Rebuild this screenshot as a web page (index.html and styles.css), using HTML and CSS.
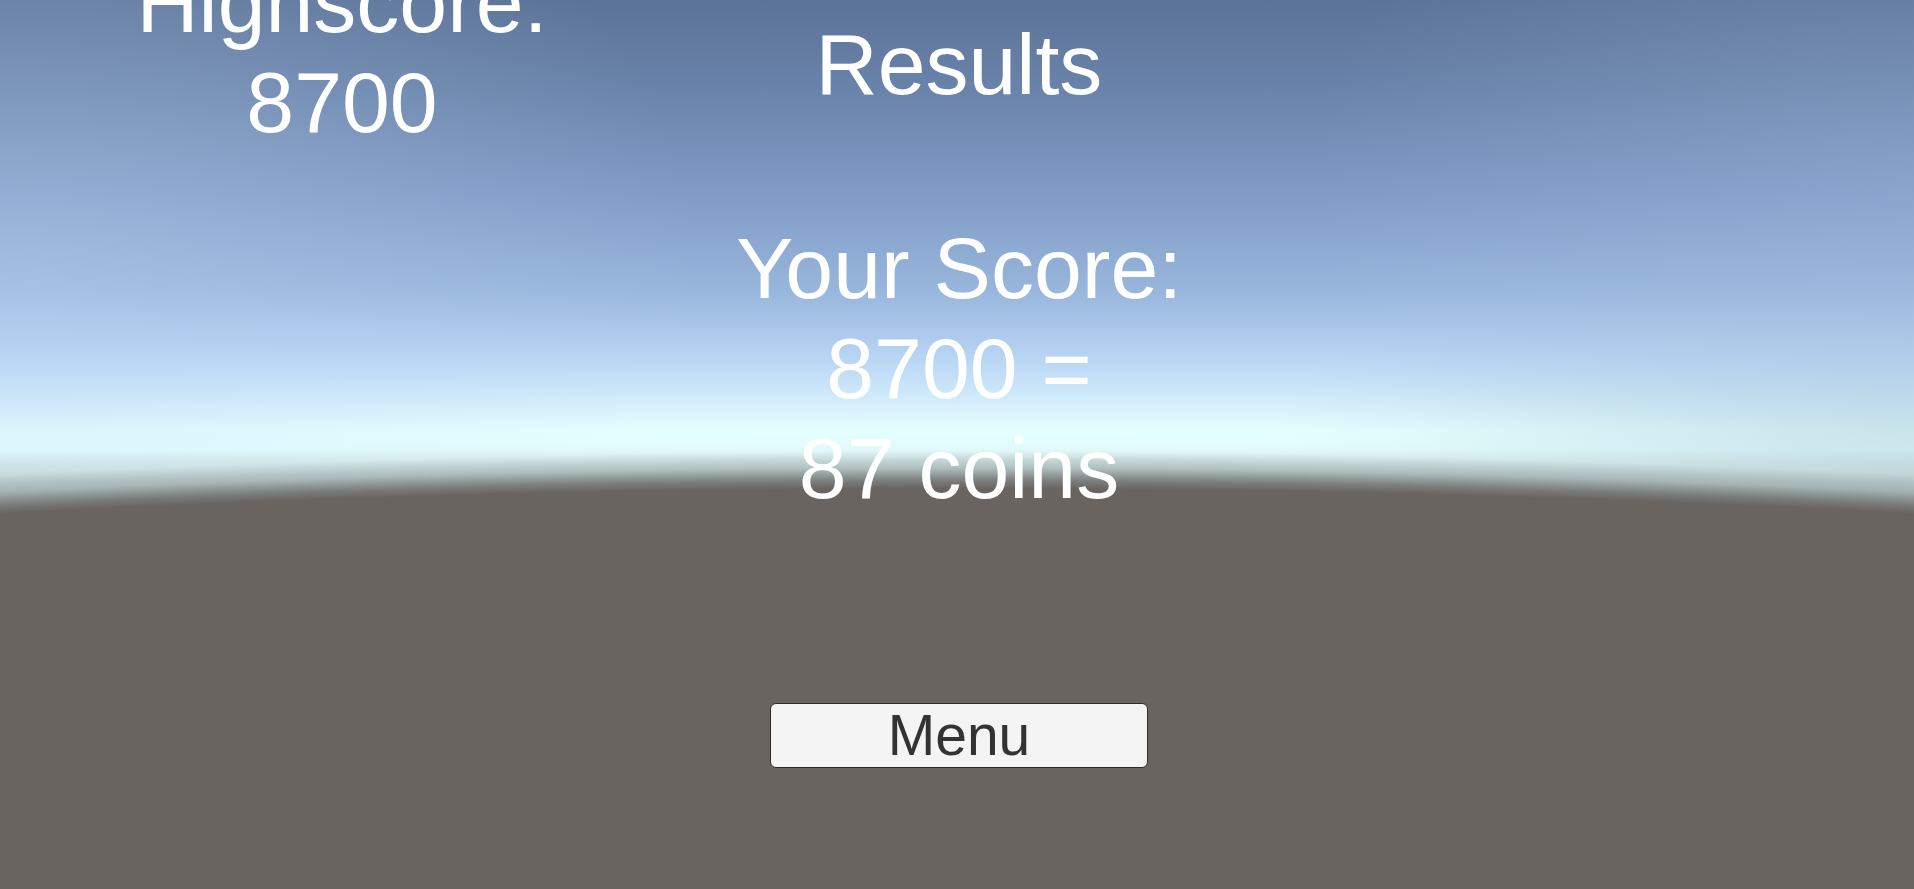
FILE: index.html
```html
<!DOCTYPE html>
<html lang="en">
<head>
<meta charset="utf-8">
<title>Results</title>
<link rel="stylesheet" href="styles.css">
</head>
<body>
<div class="screen">
  <section class="highscore">
    <div class="hs-label">Highscore:</div>
    <div class="hs-value">8700</div>
  </section>
  <main class="results">
    <h1 class="title">Results</h1>
    <div class="score">
      <div>Your Score:</div>
      <div>8700 =</div>
      <div>87 coins</div>
    </div>
    <button class="menu-btn" type="button">Menu</button>
  </main>
  <div class="spacer"></div>
</div>
</body>
</html>
```
FILE: styles.css
```css
html, body {
  margin: 0;
  padding: 0;
  height: 100%;
  overflow: hidden;
}

body {
  font-family: "Liberation Sans", Arial, sans-serif;
  color: #ffffff;
  background:
    radial-gradient(ellipse 2810px 420px at 50% 905px,
      #6a6461 0%,
      #6a6461 99.2%,
      rgba(120, 122, 121, 0.95) 101%,
      rgba(165, 180, 180, 0.75) 104%,
      rgba(215, 235, 235, 0.35) 108%,
      rgba(230, 255, 255, 0) 112%),
    radial-gradient(ellipse 650px 160px at 100% 430px, rgba(150, 180, 195, 0.3), rgba(150, 180, 195, 0) 100%),
    radial-gradient(ellipse 700px 500px at 0% 30%, rgba(190, 215, 245, 0.35), rgba(190, 215, 245, 0) 100%),
    radial-gradient(ellipse 600px 450px at 100% 20%, rgba(170, 195, 230, 0.25), rgba(170, 195, 230, 0) 100%),
    linear-gradient(to bottom,
      #5c7398 0px,
      #6a83aa 90px,
      #7f9bc4 190px,
      #98b5dc 290px,
      #b9d6f5 360px,
      #d2ecfc 400px,
      #e4ffff 430px,
      #e6ffff 450px,
      #c9dcdc 470px,
      #9fa8a7 490px,
      #6a6461 512px,
      #67605c 889px);
}

.screen {
  display: grid;
  grid-template-columns: 668px 582px 1fr;
  height: 889px;
}

.highscore {
  text-align: center;
  font-size: 86px;
  line-height: 100px;
  margin-top: -48px;
  padding-left: 16px;
}

.results {
  display: flex;
  flex-direction: column;
  align-items: center;
  text-align: center;
}

.title {
  margin: 14px 0 0;
  font-size: 86px;
  line-height: 100px;
  font-weight: normal;
}

.score {
  margin-top: 104px;
  font-size: 86px;
  line-height: 100px;
}

.menu-btn {
  margin-top: 185px;
  width: 378px;
  height: 65px;
  padding: 0;
  border: 1px solid #2e2b29;
  border-radius: 6px;
  background: #f4f4f4;
  color: #333333;
  font-family: "Liberation Sans", Arial, sans-serif;
  font-size: 57px;
  line-height: 61px;
  cursor: pointer;
}
```
